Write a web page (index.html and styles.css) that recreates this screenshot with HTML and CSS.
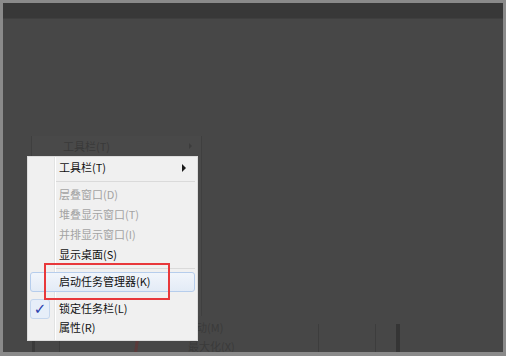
FILE: index.html
```html
<!DOCTYPE html>
<html>
<head>
  <meta charset="utf-8">
  <title>任务栏右键菜单</title>
  <link rel="stylesheet" href="styles.css">
</head>
<body>
  <div class="frame">
    <div class="topbar"></div>
    <div class="desktop">
      <!-- dimmed copy of the menu behind -->
      <div class="ghost-menu">
        <div class="ghost-item">工具栏(T)<span class="ghost-arrow"></span></div>
      </div>
      <div class="ghost-taskbar">
        <span class="ghost-text g1">移动(M)</span>
        <span class="ghost-text g2">最大化(X)</span>
        <span class="vline v1"></span>
        <span class="vline v2"></span>
        <span class="vline v3"></span>
        <span class="vline v4"></span>
        <span class="vline v5 thick"></span>
        <span class="red-curve"></span>
      </div>

      <div class="menu">
        <div class="item first">工具栏(T)<span class="arrow"></span></div>
        <div class="sep"></div>
        <div class="item disabled">层叠窗口(D)</div>
        <div class="item disabled">堆叠显示窗口(T)</div>
        <div class="item disabled">并排显示窗口(I)</div>
        <div class="item">显示桌面(S)</div>
        <div class="sep"></div>
        <div class="item hover">启动任务管理器(K)</div>
        <div class="sep short"></div>
        <div class="item checked"><span class="mark">✓</span>锁定任务栏(L)</div>
        <div class="item">属性(R)</div>
      </div>

      <div class="callout"></div>
    </div>
  </div>
</body>
</html>
```

FILE: styles.css
```css
body {
  margin: 0;
  padding: 0;
  font-family: "Noto Sans CJK SC", "Noto Sans", sans-serif;
}

.frame {
  width: 506px;
  height: 356px;
  box-sizing: border-box;
  border: 3px solid #8a8a8a;
  border-bottom-width: 4px;
  background-color: #474747;
  display: flex;
  flex-direction: column;
  overflow: hidden;
}

.topbar {
  height: 15px;
  background-color: #383838;
  border-bottom: 1px solid #3f3f3f;
}

.desktop {
  flex: 1;
  position: relative;
}

/* faded menu behind the real one */
.ghost-menu {
  position: absolute;
  left: 28px;
  top: 117px;
  width: 169px;
  height: 180px;
  border-left: 1px solid #3f3f3f;
  border-right: 1px solid #3f3f3f;
  background-color: #494949;
}

.ghost-item {
  height: 20px;
  line-height: 20px;
  font-size: 11px;
  color: #393939;
  padding-left: 31px;
  padding-bottom: 1px;
  display: flex;
  align-items: center;
}

.ghost-arrow {
  margin-left: auto;
  margin-right: 9px;
  width: 0;
  height: 0;
  border-top: 3px solid transparent;
  border-bottom: 3px solid transparent;
  border-left: 3px solid #3c3c3c;
}

.ghost-taskbar {
  position: absolute;
  left: 0;
  right: 0;
  top: 303px;
  bottom: 0;
}

.ghost-text {
  position: absolute;
  font-size: 11px;
  color: #3a3a3a;
}

.g1 {
  left: 182px;
  top: -3px;
}

.g2 {
  left: 185px;
  top: 16px;
}

.vline {
  position: absolute;
  top: 2px;
  bottom: 0;
  width: 1px;
  background-color: #3d3d3d;
}

.v1 { left: 29px; width: 3px; top: 19px; background-color: #3a3a3a; }
.v2 { left: 56px; top: 19px; }
.v3 { left: 315px; }
.v4 { left: 372px; }
.v5 { left: 393px; }
.thick { width: 4px; background-color: #353535; }

.red-curve {
  position: absolute;
  left: 132px;
  top: 18px;
  width: 3px;
  bottom: 0;
  background-color: #5a3a3a;
  transform: skewX(-8deg);
}

/* context menu */
.menu {
  position: absolute;
  left: 24px;
  top: 137px;
  width: 171px;
  height: 185px;
  box-sizing: border-box;
  border: 1px solid #dcdcdc;
  padding: 1px 0 2px 0;
  background-color: #f0f0f0;
  background-image: linear-gradient(to right, transparent 26px, #e2e3e3 26px, #e2e3e3 27px, #ffffff 27px, #ffffff 28px, transparent 28px);
  display: flex;
  flex-direction: column;
  font-size: 11px;
  color: #111111;
}

.item {
  height: 20px;
  box-sizing: border-box;
  margin: 0 2px;
  border: 1px solid transparent;
  border-radius: 3px;
  padding-left: 28px;
  padding-bottom: 2px;
  display: flex;
  align-items: center;
  position: relative;
}

.item.first {
  height: 21px;
}

.item.disabled {
  color: #a3a3a3;
}

.item.hover {
  border-color: #b6cdec;
  background-image: linear-gradient(to bottom, #f1f5fb, #e3ebf6);
}

.arrow {
  margin-left: auto;
  margin-right: 8px;
  margin-top: 1px;
  width: 0;
  height: 0;
  border-top: 4px solid transparent;
  border-bottom: 4px solid transparent;
  border-left: 4px solid #1a1a1a;
}

.item.checked {
  padding-left: 0;
  padding-bottom: 0;
}

.item.checked .label-fix {
  margin-bottom: 2px;
}

.mark {
  width: 20px;
  height: 20px;
  box-sizing: border-box;
  margin-left: -1px;
  margin-right: 9px;
  margin-top: 1px;
  border: 1px solid #c4d6ee;
  border-radius: 3px;
  background-color: #e6eef9;
  color: #2b3fae;
  font-family: "DejaVu Sans", sans-serif;
  font-size: 15px;
  font-weight: bold;
  display: flex;
  align-items: center;
  justify-content: center;
}

.sep {
  height: 7px;
  margin-left: 28px;
  margin-right: 2px;
  box-sizing: border-box;
  border-bottom: 3px solid transparent;
  background-image: linear-gradient(to bottom, transparent 3px, #dadada 3px, #dadada 4px, #ffffff 4px);
}

.sep.short {
  height: 6px;
}

/* red annotation box */
.callout {
  position: absolute;
  left: 41px;
  top: 244px;
  width: 126px;
  height: 37px;
  box-sizing: border-box;
  border: 2px solid #e8383b;
}
```
